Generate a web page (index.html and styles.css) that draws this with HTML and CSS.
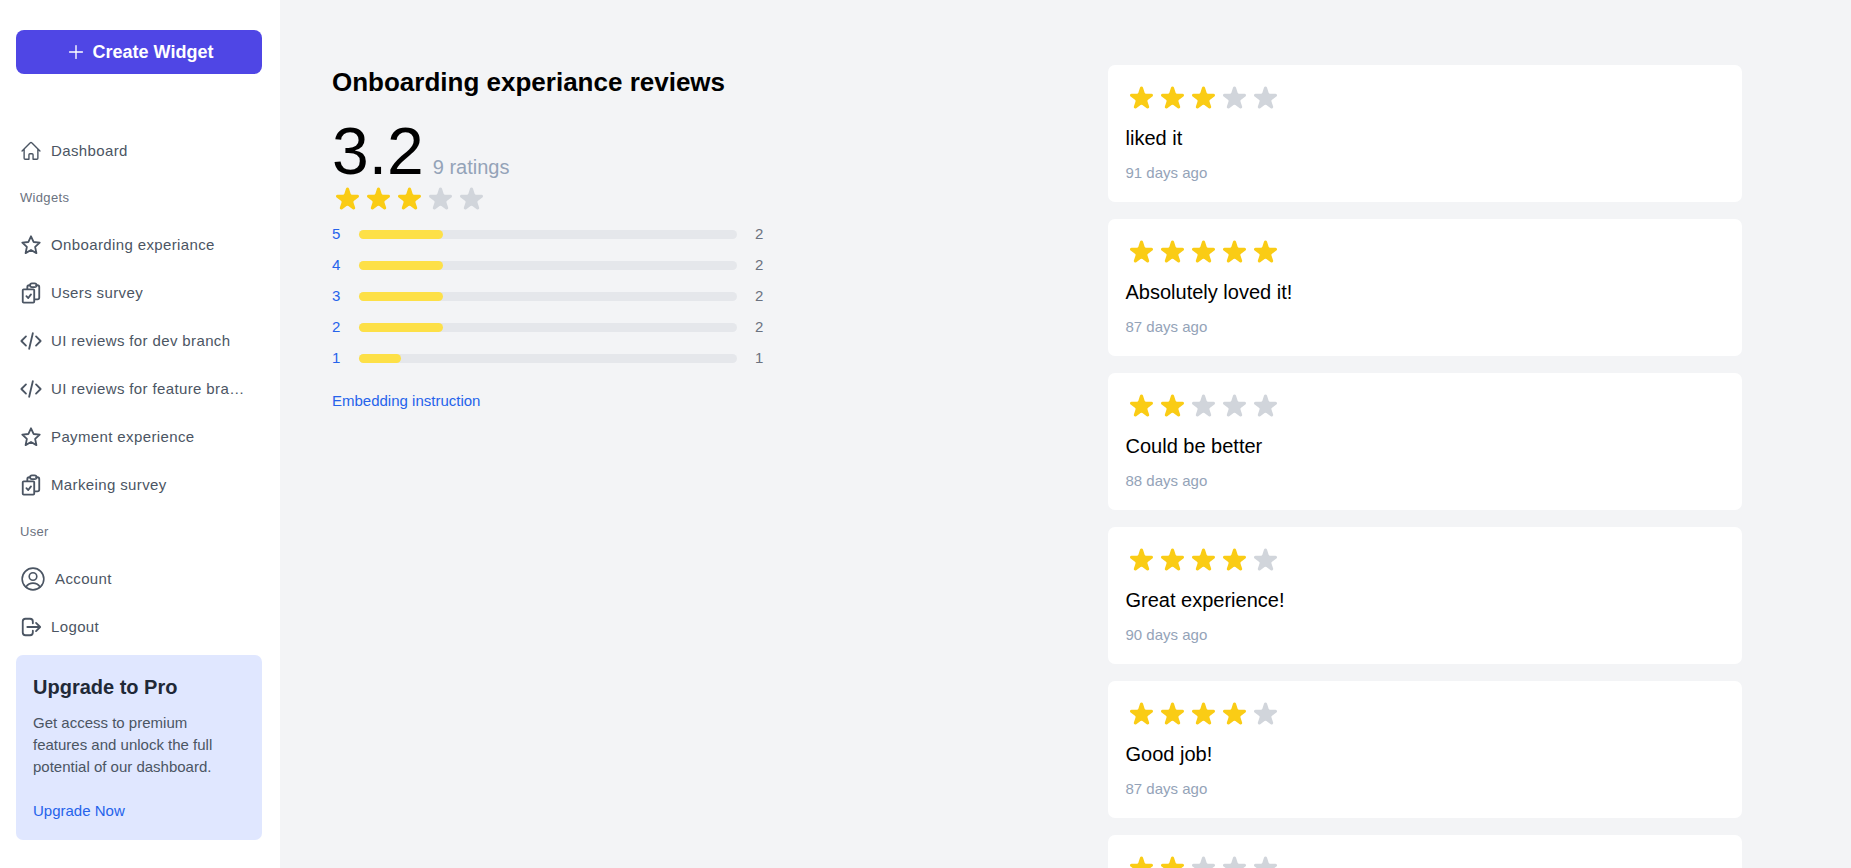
FILE: index.html
```html
<!DOCTYPE html>
<html lang="en">
<head>
  <meta charset="UTF-8" />
  <meta name="viewport" content="width=device-width, initial-scale=1.0"/>
  <title>Onboarding experiance reviews</title>
  <link rel="stylesheet" href="styles.css">
</head>
<body>
  <svg class="sprite" aria-hidden="true">
    <symbol id="i-home" viewBox="0 0 24 24"><path d="M2.25 12l8.95-8.95a1.1 1.1 0 0 1 1.6 0L21.75 12M4.5 9.75v10.1c0 .65.5 1.15 1.13 1.15H9.75v-4.9c0-.6.5-1.1 1.13-1.1h2.24c.63 0 1.13.5 1.13 1.1V21h4.12c.63 0 1.13-.5 1.13-1.13V9.75"/></symbol>
    <symbol id="i-star" viewBox="0 0 24 24"><path d="M12 2.5l2.8 6.2 6.7.7-5 4.6 1.4 6.9-5.9-3.4-5.9 3.4 1.4-6.9-5-4.6 6.7-.7z"/></symbol>
    <symbol id="i-survey" viewBox="0 0 24 24"><path d="M4 8h10.5a1 1 0 0 1 1 1v12.500a1 1 0 0 1-1 1H4a1 1 0 0 1-1-1V9a1 1 0 0 1 1-1zM8 8V5.500a2 2 0 0 1 2-2h1M17.500 3.500H19a2 2 0 0 1 2 2V17a2 2 0 0 1-2 2h-3.500M13 1.500h3a2 2 0 0 1 0 4h-3a2 2 0 0 1 0-4zM7 15.500l2 2 3-4"/></symbol>
    <symbol id="i-code" viewBox="0 0 24 24"><path d="M6.500 7L1.500 12l5 5M17.500 7l5 5-5 5M14 3.500l-4 17"/></symbol>
    <symbol id="i-user" viewBox="0 0 24 24"><circle cx="12" cy="12" r="10"/><circle cx="12" cy="9.700" r="3.500"/><path d="M5.500 19.300c1.800-2.600 3.800-3.500 6.500-3.500s4.700.9 6.500 3.500"/></symbol>
    <symbol id="i-logout" viewBox="0 0 24 24"><path d="M14 8V6a3 3 0 0 0-3-3H6a3 3 0 0 0-3 3v12a3 3 0 0 0 3 3h5a3 3 0 0 0 3-3v-2M8 12h13.500M17.500 7.500L22 12l-4.500 4.500"/></symbol>
    <symbol id="i-rate" viewBox="0 0 20 20"><path d="M9.049 2.927c.3-.921 1.603-.921 1.902 0l1.07 3.292a1 1 0 00.95.69h3.462c.969 0 1.371 1.24.588 1.81l-2.8 2.034a1 1 0 00-.364 1.118l1.07 3.292c.3.921-.755 1.688-1.54 1.118l-2.8-2.034a1 1 0 00-1.175 0l-2.8 2.034c-.784.57-1.838-.197-1.539-1.118l1.07-3.292a1 1 0 00-.364-1.118L2.98 8.72c-.783-.57-.38-1.81.588-1.81h3.461a1 1 0 00.951-.69l1.07-3.292z"/></symbol>
  </svg>

  <aside class="sidebar">
    <button class="create" type="button">
      <svg class="icon" viewBox="0 0 24 24"><path d="M12 5v14M5 12h14"/></svg>
      Create Widget
    </button>

    <nav class="menu">
      <a href="#"><svg class="icon"><use href="#i-home"/></svg><span>Dashboard</span></a>
      <h2>Widgets</h2>
      <a href="#"><svg class="icon bold"><use href="#i-star"/></svg><span>Onboarding experiance</span></a>
      <a href="#"><svg class="icon bold"><use href="#i-survey"/></svg><span>Users survey</span></a>
      <a href="#"><svg class="icon bold"><use href="#i-code"/></svg><span>UI reviews for dev branch</span></a>
      <a href="#"><svg class="icon bold"><use href="#i-code"/></svg><span>UI reviews for feature branch</span></a>
      <a href="#"><svg class="icon bold"><use href="#i-star"/></svg><span>Payment experience</span></a>
      <a href="#"><svg class="icon bold"><use href="#i-survey"/></svg><span>Markeing survey</span></a>
      <h2>User</h2>
      <a href="#"><svg class="icon large"><use href="#i-user"/></svg><span>Account</span></a>
      <a href="#"><svg class="icon bold"><use href="#i-logout"/></svg><span>Logout</span></a>
    </nav>

    <div class="upgrade">
      <h3>Upgrade to Pro</h3>
      <p>Get access to premium features and unlock the full potential of our dashboard.</p>
      <a href="#">Upgrade Now</a>
    </div>
  </aside>

  <main class="content">
    <section class="summary">
      <h1>Onboarding experiance reviews</h1>
      <div class="score"><strong>3.2</strong><span>9 ratings</span></div>
      <div class="stars" data-rate="3"></div>
      <div class="bars">
        <div class="bar"><a href="#">5</a><div class="track"><div class="fill" style="width: 22.2%"></div></div><span>2</span></div>
        <div class="bar"><a href="#">4</a><div class="track"><div class="fill" style="width: 22.2%"></div></div><span>2</span></div>
        <div class="bar"><a href="#">3</a><div class="track"><div class="fill" style="width: 22.2%"></div></div><span>2</span></div>
        <div class="bar"><a href="#">2</a><div class="track"><div class="fill" style="width: 22.2%"></div></div><span>2</span></div>
        <div class="bar"><a href="#">1</a><div class="track"><div class="fill" style="width: 11.1%"></div></div><span>1</span></div>
      </div>
      <a class="embed" href="#">Embedding instruction</a>
    </section>

    <section class="reviews">
      <article class="review"><div class="stars" data-rate="3"></div><p>liked it</p><time>91 days ago</time></article>
      <article class="review"><div class="stars" data-rate="5"></div><p>Absolutely loved it!</p><time>87 days ago</time></article>
      <article class="review"><div class="stars" data-rate="2"></div><p>Could be better</p><time>88 days ago</time></article>
      <article class="review"><div class="stars" data-rate="4"></div><p>Great experience!</p><time>90 days ago</time></article>
      <article class="review"><div class="stars" data-rate="4"></div><p>Good job!</p><time>87 days ago</time></article>
      <article class="review"><div class="stars" data-rate="2"></div></article>
    </section>
  </main>

  <script>
    document.querySelectorAll('.stars').forEach(el => {
      const rate = Number(el.dataset.rate);
      let html = '';
      for (let i = 1; i <= 5; i++) {
        html += `<svg class="${i <= rate ? 'on' : 'off'}"><use href="#i-rate"/></svg>`;
      }
      el.innerHTML = html;
    });
  </script>
</body>
</html>
```
FILE: styles.css
```css
* { box-sizing: border-box; margin: 0; padding: 0; }
body { display: flex; height: 100vh; overflow: hidden; font-family: "Liberation Sans", Arial, sans-serif; font-size: 15px; line-height: 22px; background: #f3f4f6; color: #000; }
a { color: #2563eb; text-decoration: none; }
.sprite { display: none; }
.icon { width: 22px; height: 22px; flex-shrink: 0; fill: none; stroke: currentColor; stroke-width: 1.5; stroke-linecap: round; stroke-linejoin: round; }
.icon.bold { stroke-width: 2; }
.icon.large { width: 26px; height: 26px; }

/* sidebar */
.sidebar { width: 280px; flex-shrink: 0; padding: 30px 18px 0 16px; background: #fff; }
.create { display: flex; align-items: center; justify-content: center; gap: 6px; width: 100%; height: 44px; border: 0; border-radius: 8px; background: #4f46e5; color: #fff; font: bold 18px "Liberation Sans", Arial, sans-serif; }
.menu { margin-top: 53px; }
.menu a { display: flex; align-items: center; gap: 9px; height: 48px; padding: 0 12px 0 4px; color: #4b5563; letter-spacing: 0.025em; }
.menu span { overflow: hidden; white-space: nowrap; text-overflow: ellipsis; }
.menu h2 { padding-left: 4px; font-size: 13px; font-weight: normal; line-height: 46px; letter-spacing: 0.025em; color: #6b7280; }
.upgrade { margin-top: 4px; padding: 18px 17px; border-radius: 7px; background: #e0e7ff; }
.upgrade h3 { font-size: 20px; line-height: 28px; color: #1f2937; }
.upgrade p { margin: 11px 0 22px; color: #4b5563; }

/* rating summary */
.content { display: flex; justify-content: space-between; align-items: flex-start; flex: 1; height: 100vh; overflow: hidden; padding: 65px 109px 0 52px; }
.summary { width: 450px; }
.summary h1 { font-size: 26px; line-height: 35px; }
.score { display: flex; align-items: baseline; gap: 9px; margin-top: 18px; }
.score strong { font-size: 66px; font-weight: normal; line-height: 66px; }
.score span { font-size: 20px; color: #94a3b8; }
.stars { display: flex; }
.stars svg { width: 31px; height: 31px; }
.on { fill: #facc15; }
.off { fill: #d1d5db; }
.bars { display: grid; gap: 9px; margin-top: 8px; }
.bar { display: flex; align-items: center; }
.bar a { width: 27px; }
.bar span { width: 27px; color: #6b7280; }
.track { flex: 1; height: 9px; margin-right: 18px; border-radius: 5px; background: #e5e7eb; }
.fill { height: 100%; border-radius: 5px; background: #fde047; }
.embed { display: inline-block; margin-top: 21px; }

/* reviews */
.reviews { display: grid; gap: 17px; width: 45%; }
.review { min-height: 137px; padding: 18px; border-radius: 7px; background: #fff; }
.review p { margin-top: 9px; font-size: 20px; line-height: 31px; }
.review time { display: block; margin-top: 8px; color: #94a3b8; }
```
